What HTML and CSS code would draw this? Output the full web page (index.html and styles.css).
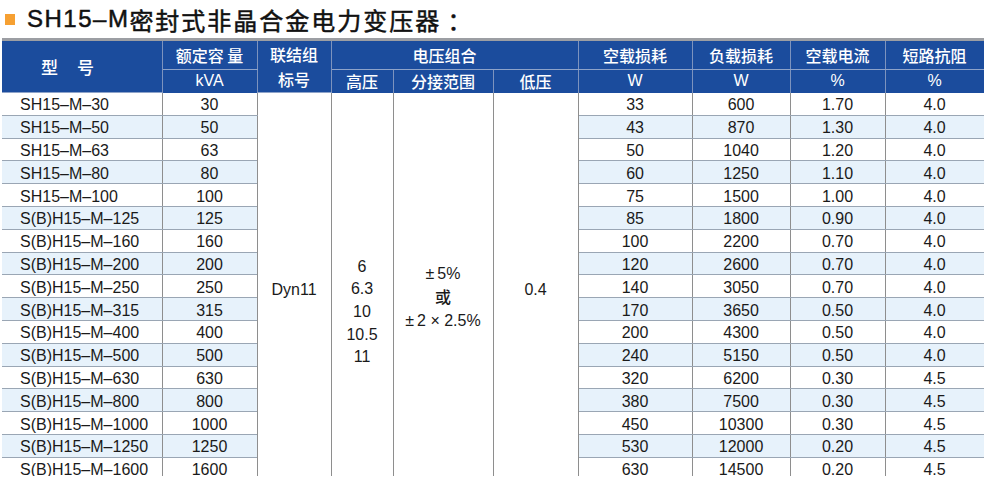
FILE: index.html
```html
<!DOCTYPE html>
<html lang="zh-CN">
<head>
<meta charset="utf-8">
<title>SH15-M密封式非晶合金电力变压器</title>
<link rel="stylesheet" href="styles.css">
</head>
<body>
<h1 class="title"><span class="mark"></span><span class="t-lat">SH15–M</span><span class="t-cjk">密封式非晶合金电力变压器</span><span class="t-colon">：</span></h1>
<div class="wrap">
<table class="spec">
<colgroup>
<col style="width:160px"><col style="width:95px"><col style="width:74px"><col style="width:62px"><col style="width:100px"><col style="width:85px"><col style="width:114px"><col style="width:98px"><col style="width:95px"><col style="width:99px">
</colgroup>
<thead>
<tr class="h1">
<th rowspan="2" class="model-h"><span class="sp">型</span>号</th>
<th>额定容 量</th>
<th rowspan="2" class="two">联结组<br>标号</th>
<th colspan="3" class="volt">电压组合</th>
<th>空载损耗</th>
<th>负载损耗</th>
<th>空载电流</th>
<th>短路抗阻</th>
</tr>
<tr class="h2">
<th class="lat">kVA</th>
<th>高压</th>
<th>分接范围</th>
<th>低压</th>
<th class="lat">W</th>
<th class="lat">W</th>
<th class="lat">%</th>
<th class="lat">%</th>
</tr>
</thead>
<tbody>
<tr><td class="m">SH15–M–30</td><td>30</td>
<td rowspan="17" class="merge p-dyn">Dyn11</td>
<td rowspan="17" class="merge p-hv">6<br>6.3<br>10<br>10.5<br>11</td>
<td rowspan="17" class="merge p-tap"><span class="pm">±</span>5%<br><span class="cj">或</span><br><span class="pm">±</span>2 × 2.5%</td>
<td rowspan="17" class="merge p-lv">0.4</td>
<td>33</td><td>600</td><td>1.70</td><td>4.0</td></tr>
<tr><td class="m">SH15–M–50</td><td>50</td><td>43</td><td>870</td><td>1.30</td><td>4.0</td></tr>
<tr><td class="m">SH15–M–63</td><td>63</td><td>50</td><td>1040</td><td>1.20</td><td>4.0</td></tr>
<tr><td class="m">SH15–M–80</td><td>80</td><td>60</td><td>1250</td><td>1.10</td><td>4.0</td></tr>
<tr><td class="m">SH15–M–100</td><td>100</td><td>75</td><td>1500</td><td>1.00</td><td>4.0</td></tr>
<tr><td class="m">S(B)H15–M–125</td><td>125</td><td>85</td><td>1800</td><td>0.90</td><td>4.0</td></tr>
<tr><td class="m">S(B)H15–M–160</td><td>160</td><td>100</td><td>2200</td><td>0.70</td><td>4.0</td></tr>
<tr><td class="m">S(B)H15–M–200</td><td>200</td><td>120</td><td>2600</td><td>0.70</td><td>4.0</td></tr>
<tr><td class="m">S(B)H15–M–250</td><td>250</td><td>140</td><td>3050</td><td>0.70</td><td>4.0</td></tr>
<tr><td class="m">S(B)H15–M–315</td><td>315</td><td>170</td><td>3650</td><td>0.50</td><td>4.0</td></tr>
<tr><td class="m">S(B)H15–M–400</td><td>400</td><td>200</td><td>4300</td><td>0.50</td><td>4.0</td></tr>
<tr><td class="m">S(B)H15–M–500</td><td>500</td><td>240</td><td>5150</td><td>0.50</td><td>4.0</td></tr>
<tr><td class="m">S(B)H15–M–630</td><td>630</td><td>320</td><td>6200</td><td>0.30</td><td>4.5</td></tr>
<tr><td class="m">S(B)H15–M–800</td><td>800</td><td>380</td><td>7500</td><td>0.30</td><td>4.5</td></tr>
<tr><td class="m">S(B)H15–M–1000</td><td>1000</td><td>450</td><td>10300</td><td>0.30</td><td>4.5</td></tr>
<tr><td class="m">S(B)H15–M–1250</td><td>1250</td><td>530</td><td>12000</td><td>0.20</td><td>4.5</td></tr>
<tr><td class="m">S(B)H15–M–1600</td><td>1600</td><td>630</td><td>14500</td><td>0.20</td><td>4.5</td></tr>
</tbody>
</table>
</div>
</body>
</html>
```
FILE: styles.css
```css
html, body {
  margin: 0;
  padding: 0;
  background: #ffffff;
}
body {
  width: 986px;
  height: 495px;
  overflow: hidden;
  font-family: "Liberation Sans", "Noto Sans CJK SC", sans-serif;
  color: #1a1a1a;
}
.title {
  margin: 0;
  height: 38px;
  display: flex;
  align-items: center;
  padding-left: 5px;
  font-weight: normal;
  color: #111;
  -webkit-text-stroke: 0.5px #111;
}
.mark {
  width: 10px;
  height: 11px;
  background: #f6a032;
  margin-right: 12px;
  -webkit-text-stroke: 0;
}
.t-lat {
  font-family: "Liberation Sans", sans-serif;
  font-size: 24px;
  letter-spacing: 1.5px;
}
.t-cjk {
  font-family: "Noto Sans CJK SC", sans-serif;
  font-size: 24px;
  letter-spacing: 2px;
}
.t-colon {
  font-family: "Noto Sans CJK SC", sans-serif;
  font-size: 24px;
  margin-left: 6px;
}
.wrap {
  margin-left: 2px;
  width: 982px;
  height: 438px;
  overflow: hidden;
}
.spec {
  width: 982px;
  table-layout: fixed;
  border-collapse: collapse;
  border-top: 3px solid #9c9ea3;
}
.spec th {
  background: #1b4c9d;
  color: #ffffff;
  font-family: "Noto Sans CJK SC", sans-serif;
  font-weight: 500;
  font-size: 16px;
  padding: 0;
  text-align: center;
  border-left: 1px solid #7d93be;
  border-right: 1px solid #7d93be;
  line-height: 22px;
}
.spec th:first-child { border-left: none; }
.spec tr.h1 th { height: 27px; border-bottom: 1px solid #8ea3c9; }
.spec tr.h2 th { height: 22px; }
.spec th.lat {
  font-family: "Liberation Sans", sans-serif;
  font-weight: normal;
  font-size: 16px;
}
.spec th.model-h {
  text-align: left;
  padding-left: 39px;
  font-size: 17px;
}
.spec th.model-h .sp { margin-right: 19px; }
.spec th.two { line-height: 25px; padding-top: 1px; }
.spec th.volt { padding-right: 20px; }
.spec td {
  height: 22.8px;
  padding: 3px 0 0 0;
  font-size: 16px;
  line-height: 18px;
  text-align: center;
  color: #1a1a1a;
  border-left: 1px solid #8e8e8e;
  border-right: 1px solid #8e8e8e;
  border-bottom: 1px solid #9aa6b4;
  box-sizing: border-box;
}
.spec td:first-child { border-left: none; }
.spec tbody tr:nth-child(even) td { background: #e7f2fb; }
.spec tbody tr td.merge {
  background: #ffffff;
  vertical-align: top;
  line-height: 22.7px;
  border-bottom: none;
}
.spec td.m {
  text-align: left;
  padding-left: 18px;
}
.pm { margin-right: 3px; }
.cj { font-family: "Noto Sans CJK SC", sans-serif; font-weight: 500; }
.p-dyn { padding-top: 186px !important; }
.p-lv { padding-top: 186px !important; }
.p-hv { padding-top: 163px !important; }
.p-tap { padding-top: 169px !important; line-height: 23px !important; }
```
